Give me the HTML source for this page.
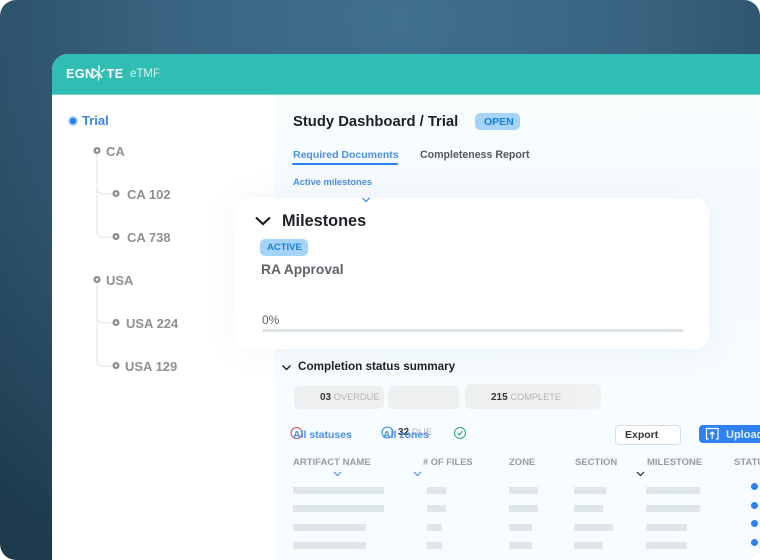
<!DOCTYPE html>
<html><head><meta charset="utf-8">
<style>
html,body{margin:0;padding:0;background:#fff}
#r{position:relative;width:760px;height:560px;overflow:hidden;border-radius:16px;
background:radial-gradient(ellipse 620px 640px at 400px 20px,#40708f 0%,#3a6582 35%,#2b4f67 70%,#1d3a4c 100%)}
#r div,#r svg{position:absolute}
.t{white-space:nowrap;font-family:"Liberation Sans",sans-serif;line-height:1;filter:blur(.25px)}
#app{left:52px;top:54px;width:708px;height:506px;background:#fff;border-radius:16px 0 0 0;overflow:hidden}
.b{background:#dfe6e7;height:7px}
.tr{color:#8f9092;font-weight:700;font-size:13px}
.h{color:#9a9b9d;font-weight:700;font-size:9.500px}
.d{width:7px;height:7px;background:#2f80f2;border-radius:50%}
</style></head><body>
<div id="r">
<div id="app">
 <div style="left:0;top:0;width:708px;height:40px;background:#30bdb3;border-bottom:1px solid #6fd2cb"></div>
 <div class="t" style="left:14px;top:14px;color:#fff;font-weight:700;font-size:12.500px;letter-spacing:.5px">EGN<span style="display:inline-block;width:12px"></span>TE</div>
 <svg style="left:39px;top:10px" width="17" height="18" viewBox="0 0 17 18" stroke="#fff" stroke-width="1.400" fill="none"><path d="M8 1.500V7.500M1.500 4.500L8 9L2 14M8 9L7.500 16.500M8 9L11 14M14 5L10.500 8"/></svg>
 <div class="t" style="left:78px;top:15px;color:#d8f4f1;font-size:11.500px">eTMF</div>
 <div style="left:223px;top:41px;width:485px;height:465px;background:linear-gradient(180deg,#f8fcfd,#f5fbff 30%,#f6fcff)"></div>
</div>

<!-- tree -->
<svg style="left:60px;top:105px" width="130" height="275" viewBox="60 105 130 275" fill="none">
 <circle cx="73" cy="121" r="5.500" fill="#d3e3fa"/><circle cx="73" cy="121" r="3.500" fill="#2f80f2"/>
 <g stroke="#e1e7eb" stroke-width="1.100">
  <path d="M97 153V232Q97 237 102 237H112"/><path d="M97 186Q97 194 103 194H112"/>
  <path d="M97 282V361Q97 366 102 366H112"/><path d="M97 315Q97 323 103 323H112"/>
 </g>
 <g fill="#fff" stroke="#8c8d90" stroke-width="2.300">
  <circle cx="97" cy="150.500" r="2.400"/><circle cx="116" cy="193.500" r="2.400"/><circle cx="116" cy="236.500" r="2.400"/>
  <circle cx="97" cy="279.500" r="2.400"/><circle cx="116" cy="322.500" r="2.400"/><circle cx="116" cy="365.500" r="2.400"/>
 </g>
</svg>
<div class="t" style="left:82px;top:114px;color:#3d86ea;font-weight:700;font-size:13px">Trial</div>
<div class="t tr" style="left:106px;top:145px">CA</div>
<div class="t tr" style="left:127px;top:188px">CA 102</div>
<div class="t tr" style="left:127px;top:231px">CA 738</div>
<div class="t tr" style="left:106px;top:274px">USA</div>
<div class="t tr" style="left:126px;top:317px">USA 224</div>
<div class="t tr" style="left:125px;top:360px">USA 129</div>

<!-- header -->
<div class="t" style="left:293px;top:115px;color:#1d2126;font-weight:700;font-size:14.800px">Study Dashboard / Trial</div>
<div style="left:475px;top:113px;width:45px;height:17px;background:#a6d4f8;border-radius:5px"></div>
<div class="t" style="left:484px;top:117px;color:#1580cf;font-weight:700;font-size:10.500px">OPEN</div>
<div class="t" style="left:293px;top:150px;color:#4b8fe8;font-weight:700;font-size:10.500px">Required Documents</div>
<div style="left:292px;top:163px;width:106px;height:2px;background:#2f80f2;border-radius:1px"></div>
<div class="t" style="left:420px;top:150px;color:#55585c;font-weight:700;font-size:10.600px">Completeness Report</div>
<div class="t" style="left:293px;top:178px;color:#4b8fe8;font-weight:700;font-size:9.300px">Active milestones</div>

<!-- card -->
<div style="left:235px;top:198px;width:474px;height:151px;background:#fff;border-radius:14px;box-shadow:0 0 30px rgba(120,140,150,.09)"></div>
<svg style="left:361px;top:197px" width="10" height="6" viewBox="0 0 10 6" fill="none" stroke="#4b8fe8" stroke-width="1.300"><path d="M1.500 1L5 4.500L8.500 1"/></svg>
<svg style="left:254px;top:215px" width="18" height="12" viewBox="0 0 18 12" fill="none" stroke="#1d2126" stroke-width="2.200"><path d="M2 2.500L9 9L16 2.500"/></svg>
<div class="t" style="left:282px;top:213px;color:#1d2126;font-weight:700;font-size:16.300px">Milestones</div>
<div style="left:260px;top:239px;width:48px;height:17px;background:#a6d4f8;border-radius:5px"></div>
<div class="t" style="left:267px;top:243px;color:#1580cf;font-weight:700;font-size:9.500px">ACTIVE</div>
<div class="t" style="left:261px;top:263px;color:#5f6268;font-weight:700;font-size:13.800px">RA Approval</div>
<div class="t" style="left:262px;top:314px;color:#5f6268;font-size:12px">0%</div>
<div style="left:262px;top:329px;width:421px;height:3px;background:#dbe3e4;border-radius:2px"></div>

<!-- summary -->
<svg style="left:281px;top:363px" width="11" height="9" viewBox="0 0 11 9" fill="none" stroke="#1d2126" stroke-width="1.500"><path d="M1.500 2.500L5.500 6.500L9.500 2.500"/></svg>
<div class="t" style="left:298px;top:361px;color:#1d2126;font-weight:700;font-size:11.700px">Completion status summary</div>
<div style="left:294px;top:386px;width:90px;height:23px;background:#eeefef;border-radius:6px"></div>
<div style="left:388px;top:386px;width:71px;height:23px;background:#eeefef;border-radius:6px"></div>
<div style="left:465px;top:384px;width:136px;height:25px;background:linear-gradient(90deg,#eeefef,#f0f1f1);border-radius:6px"></div>
<div class="t" style="left:320px;top:392px;color:#33363a;font-weight:700;font-size:10px;padding-top:1px">03 <span style="color:#b1b3b6;font-weight:400;font-size:9.200px">OVERDUE</span></div>
<div class="t" style="left:491px;top:392px;color:#33363a;font-weight:700;font-size:10px;padding-top:1px">215 <span style="color:#b1b3b6;font-weight:400;font-size:9.200px">COMPLETE</span></div>

<!-- filters -->
<svg style="left:290px;top:425px" width="180" height="16" viewBox="290 425 180 16" fill="none" stroke-width="1.100">
 <circle cx="296.500" cy="433" r="5.500" stroke="#d94a5c"/>
 <circle cx="387.500" cy="432.500" r="5.500" stroke="#3d86ea"/>
 <circle cx="460" cy="433" r="5.500" stroke="#3aa58a"/>
 <path d="M457.500 433L459.500 435L462.500 431" stroke="#3aa58a"/>
</svg>
<div class="t" style="left:398px;top:428px;color:#33363a;font-weight:700;font-size:10px">32 <span style="color:#b1b3b6;font-weight:400;font-size:9.500px">DUE</span></div>
<div class="t" style="left:293px;top:430px;color:#4b8fe8;font-weight:700;font-size:10.500px">All statuses</div>
<div class="t" style="left:383px;top:430px;color:#4b8fe8;font-weight:700;font-size:10.500px">All zones</div>
<div style="left:615px;top:425px;width:64px;height:18px;background:#fff;border:1px solid #d5dde3;border-radius:4px"></div>
<div class="t" style="left:625px;top:430px;color:#33363a;font-weight:700;font-size:10.500px">Export</div>
<div style="left:699px;top:425px;width:70px;height:18px;background:#2f80f2;border-radius:4px"></div>
<svg style="left:705px;top:427px" width="15" height="14" viewBox="0 0 15 14" fill="none" stroke="#fff" stroke-width="1.200"><path d="M3.500 12H1.500V1.500H13V12H11M7.200 12V5.500M4.800 7.500L7.200 5L9.600 7.500"/></svg>
<div class="t" style="left:726px;top:430px;color:#e2eefd;font-weight:700;font-size:11px">Upload</div>

<!-- table -->
<div class="t h" style="left:293px;top:458px">ARTIFACT NAME</div>
<div class="t h" style="left:423px;top:458px;font-size:9.300px"># OF FILES</div>
<div class="t h" style="left:509px;top:458px">ZONE</div>
<div class="t h" style="left:575px;top:458px">SECTION</div>
<div class="t h" style="left:647px;top:458px">MILESTONE</div>
<div class="t h" style="left:734px;top:458px">STATUS</div>
<svg style="left:333px;top:471px" width="9" height="6" viewBox="0 0 9 6" fill="none" stroke="#4b8fe8" stroke-width="1.200"><path d="M1 1L4.500 4.500L8 1"/></svg>
<svg style="left:413px;top:471px" width="9" height="6" viewBox="0 0 9 6" fill="none" stroke="#4b8fe8" stroke-width="1.200"><path d="M1 1L4.500 4.500L8 1"/></svg>
<svg style="left:636px;top:471px" width="9" height="6" viewBox="0 0 9 6" fill="none" stroke="#25282c" stroke-width="1.200"><path d="M1 1L4.500 4.500L8 1"/></svg>

<div class="b" style="left:293px;top:487px;width:91px"></div>
<div class="b" style="left:293px;top:505px;width:91px"></div>
<div class="b" style="left:293px;top:524px;width:73px"></div>
<div class="b" style="left:293px;top:542px;width:73px"></div>
<div class="b" style="left:427px;top:487px;width:19px"></div>
<div class="b" style="left:427px;top:505px;width:19px"></div>
<div class="b" style="left:427px;top:524px;width:15px"></div>
<div class="b" style="left:427px;top:542px;width:15px"></div>
<div class="b" style="left:509px;top:487px;width:29px"></div>
<div class="b" style="left:509px;top:505px;width:29px"></div>
<div class="b" style="left:509px;top:524px;width:23px"></div>
<div class="b" style="left:509px;top:542px;width:23px"></div>
<div class="b" style="left:574px;top:487px;width:32px"></div>
<div class="b" style="left:574px;top:505px;width:29px"></div>
<div class="b" style="left:574px;top:524px;width:39px"></div>
<div class="b" style="left:574px;top:542px;width:29px"></div>
<div class="b" style="left:646px;top:487px;width:54px"></div>
<div class="b" style="left:646px;top:505px;width:54px"></div>
<div class="b" style="left:646px;top:524px;width:41px"></div>
<div class="b" style="left:646px;top:542px;width:41px"></div>
<div class="d" style="left:751px;top:483px"></div>
<div class="d" style="left:751px;top:502px"></div>
<div class="d" style="left:751px;top:520px"></div>
<div class="d" style="left:751px;top:539px"></div>
<div class="d" style="left:751px;top:558px"></div>
</div>
</body></html>
